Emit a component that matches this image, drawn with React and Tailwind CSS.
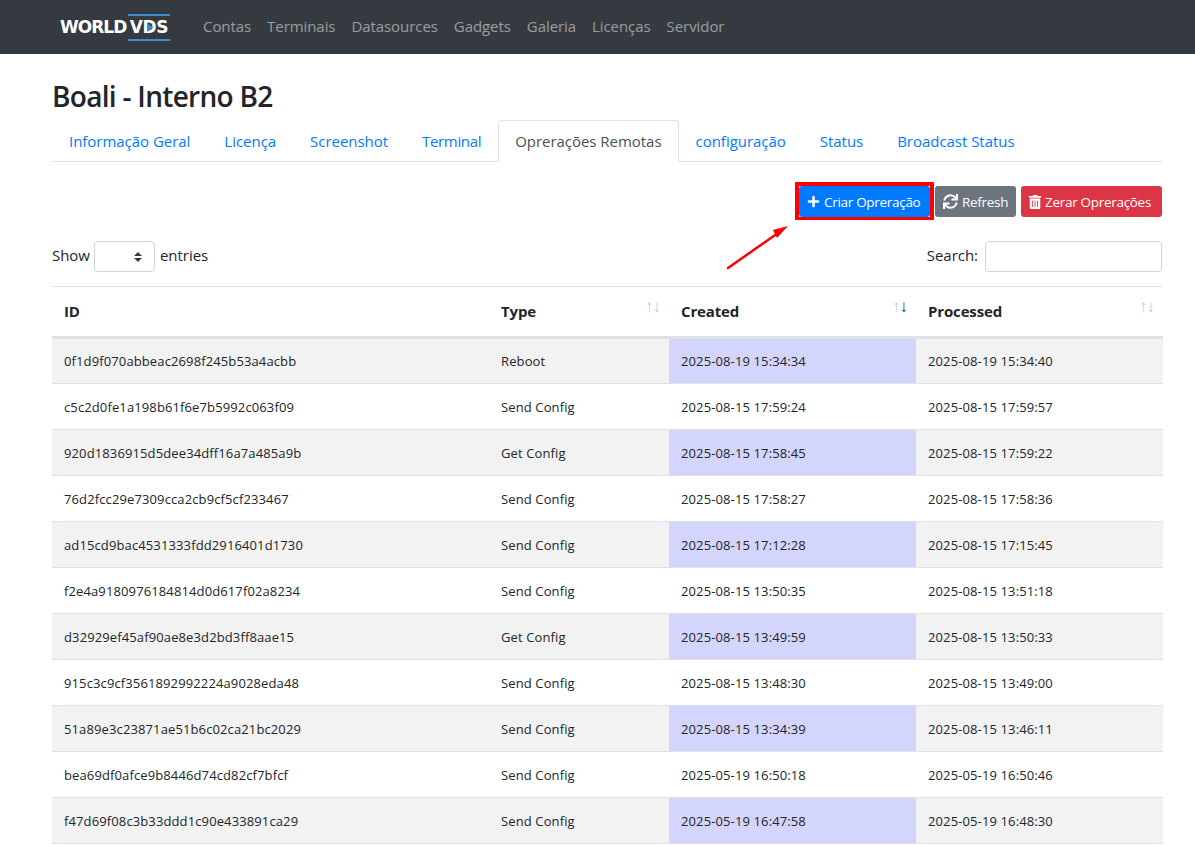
import React from 'react'
import { FaPlus, FaSync, FaTrashAlt } from 'react-icons/fa'

const navLinks = ['Contas', 'Terminais', 'Datasources', 'Gadgets', 'Galeria', 'Licenças', 'Servidor']
const tabs = ['Informação Geral', 'Licença', 'Screenshot', 'Terminal', 'Oprerações Remotas', 'configuração', 'Status', 'Broadcast Status']

const rows = [
  ['0f1d9f070abbeac2698f245b53a4acbb', 'Reboot', '2025-08-19 15:34:34', '2025-08-19 15:34:40'],
  ['c5c2d0fe1a198b61f6e7b5992c063f09', 'Send Config', '2025-08-15 17:59:24', '2025-08-15 17:59:57'],
  ['920d1836915d5dee34dff16a7a485a9b', 'Get Config', '2025-08-15 17:58:45', '2025-08-15 17:59:22'],
  ['76d2fcc29e7309cca2cb9cf5cf233467', 'Send Config', '2025-08-15 17:58:27', '2025-08-15 17:58:36'],
  ['ad15cd9bac4531333fdd2916401d1730', 'Send Config', '2025-08-15 17:12:28', '2025-08-15 17:15:45'],
  ['f2e4a9180976184814d0d617f02a8234', 'Send Config', '2025-08-15 13:50:35', '2025-08-15 13:51:18'],
  ['d32929ef45af90ae8e3d2bd3ff8aae15', 'Get Config', '2025-08-15 13:49:59', '2025-08-15 13:50:33'],
  ['915c3c9cf3561892992224a9028eda48', 'Send Config', '2025-08-15 13:48:30', '2025-08-15 13:49:00'],
  ['51a89e3c23871ae51b6c02ca21bc2029', 'Send Config', '2025-08-15 13:34:39', '2025-08-15 13:46:11'],
  ['bea69df0afce9b8446d74cd82cf7bfcf', 'Send Config', '2025-05-19 16:50:18', '2025-05-19 16:50:46'],
  ['f47d69f08c3b33ddd1c90e433891ca29', 'Send Config', '2025-05-19 16:47:58', '2025-05-19 16:48:30'],
]

function Logo() {
  return (
    <div className="flex items-center w-[110px] text-white font-['DejaVu_Sans',sans-serif] font-bold text-[17px] leading-none">
      <span className="w-[68px] tracking-[-1px]">WORLD</span>
      <span className="flex-1 border-y-2 border-[#3d8fc6] py-[3px] flex items-center justify-center tracking-[-0.4px]">
        V
        <span className="relative">
          D
          <svg className="absolute left-[4px] top-[4px]" width="6" height="9" viewBox="0 0 6 9">
            <path d="M0 0 L6 4.5 L0 9 Z" fill="#3d8fc6" />
          </svg>
        </span>
        S
      </span>
    </div>
  )
}

function SortHead({ label, active, sorted }) {
  return (
    <th className="relative text-left font-bold px-3 pt-[13px] pb-[13px] border-t border-b-[3px] border-[#dee2e6]">
      {label}
      {sorted !== undefined && (
        <span className="absolute right-[9px] top-[10px] text-[17px] leading-none font-normal tracking-[-1px] text-[#c9cbce]">
          ↑<span className={active ? 'text-[#343a40]' : ''}>↓</span>
        </span>
      )}
    </th>
  )
}

export default function App() {
  return (
    <div className="relative h-[846px] overflow-hidden bg-white text-[#212529] font-['Open_Sans',sans-serif] text-[15px] tracking-[-0.03px]">
      {/* navbar */}
      <nav className="h-[54px] bg-[#343a40] flex items-center pl-[60px]">
        <Logo />
        <div className="flex gap-4 ml-[33px] -mt-[2px] tracking-[-0.07px] text-[rgba(255,255,255,0.5)]">
          {navLinks.map(l => <a key={l}>{l}</a>)}
        </div>
      </nav>

      <div className="pl-[52px] pr-[33px]">
        <h1 className="mt-[25px] text-[28px] leading-[34px] font-semibold tracking-[-0.7px]">Boali - Interno B2</h1>

        {/* tabs */}
        <div className="mt-[7px] flex border-b border-[#dee2e6] h-[42px]">
          {tabs.map((t, i) => (
            <a key={t} className={i === 4
              ? 'px-4 pt-[9px] h-[42px] bg-white border border-[#dee2e6] border-b-white rounded-t text-[#495057]'
              : 'px-[17px] pt-[10px] text-[#007bff] [&:nth-child(4)]:tracking-[-0.35px]'}>{t}</a>
          ))}
        </div>

        {/* actions */}
        <div className="mt-[24px] flex justify-end text-[13.5px] tracking-[-0.3px] text-white">
          <div className="border-[4px] border-b-[3px] border-[#ff0000] -mt-[4px] -mb-[3px]">
            <button className="h-[31px] w-[131px] pl-2 bg-[#007bff] rounded-[3px] flex items-center gap-[4px]">
              <FaPlus size={13} /><span className="mt-[1px]">Criar Opreração</span>
            </button>
          </div>
          <button className="h-[31px] w-[81px] pl-2 ml-[1px] bg-[#6c757d] rounded-[3px] flex items-center gap-[4px]">
            <FaSync size={15} /><span className="mt-[1px]">Refresh</span>
          </button>
          <button className="h-[31px] w-[141px] pl-[7px] ml-[5px] bg-[#dc3545] rounded-[3px] flex items-center gap-[3px]">
            <FaTrashAlt size={14} /><span className="mt-[1px]">Zerar Oprerações</span>
          </button>
        </div>

        {/* length and search */}
        <div className="mt-[24px] flex justify-between items-center h-[31px]">
          <div className="flex items-center gap-[5px]">
            <span className="-mt-[2px] -mr-[1px]">Show</span>
            <div className="w-[61px] h-[31px] border border-[#ced4da] rounded flex items-center justify-end pr-[12px]">
              <svg width="8" height="10" viewBox="0 0 8 10"><path d="M4 0 L8 4 L0 4 Z M4 10 L0 6 L8 6 Z" fill="#343a40" /></svg>
            </div>
            <span className="-mt-[2px]">entries</span>
          </div>
          <div className="flex items-center gap-[7px]">
            <span className="-mt-[2px]">Search:</span>
            <div className="w-[177px] h-[31px] border border-[#ced4da] rounded" />
          </div>
        </div>

        {/* table */}
        <table className="mt-[14px] w-[1111px] table-fixed border-collapse text-[#212529] tracking-[-0.15px]">
          <colgroup>
            <col className="w-[437px]" />
            <col className="w-[180px]" />
            <col className="w-[247px]" />
            <col className="w-[247px]" />
          </colgroup>
          <thead>
            <tr>
              <SortHead label="ID" />
              <SortHead label="Type" sorted={false} />
              <SortHead label="Created" sorted active />
              <SortHead label="Processed" sorted={false} />
            </tr>
          </thead>
          <tbody className="text-[13px] tracking-[0.12px]">
            {rows.map((r, i) => (
              <tr key={r[0]} className={i % 2 === 0 ? 'bg-[#f2f2f2]' : 'bg-white'}>
                <td className="h-[46px] px-3 pt-[3px] border-b border-[#dee2e6]">{r[0]}</td>
                <td className="h-[46px] px-3 pt-[3px] border-b border-[#dee2e6]">{r[1]}</td>
                <td className={`h-[46px] px-3 pt-[3px] border-b border-[#dee2e6] ${i % 2 === 0 ? 'bg-[#d4d5fc]' : ''}`}>{r[2]}</td>
                <td className="h-[46px] px-3 pt-[3px] border-b border-[#dee2e6]">{r[3]}</td>
              </tr>
            ))}
          </tbody>
        </table>
      </div>

      {/* annotation arrow */}
      <svg className="absolute left-[720px] top-[220px]" width="75" height="55" viewBox="0 0 75 55">
        <path d="M8 48 L58 13" stroke="#f00" strokeWidth="2.5" strokeLinecap="round" />
        <path d="M68 6 L53 10 L57 18 Z" fill="#f00" />
      </svg>
    </div>
  )
}
